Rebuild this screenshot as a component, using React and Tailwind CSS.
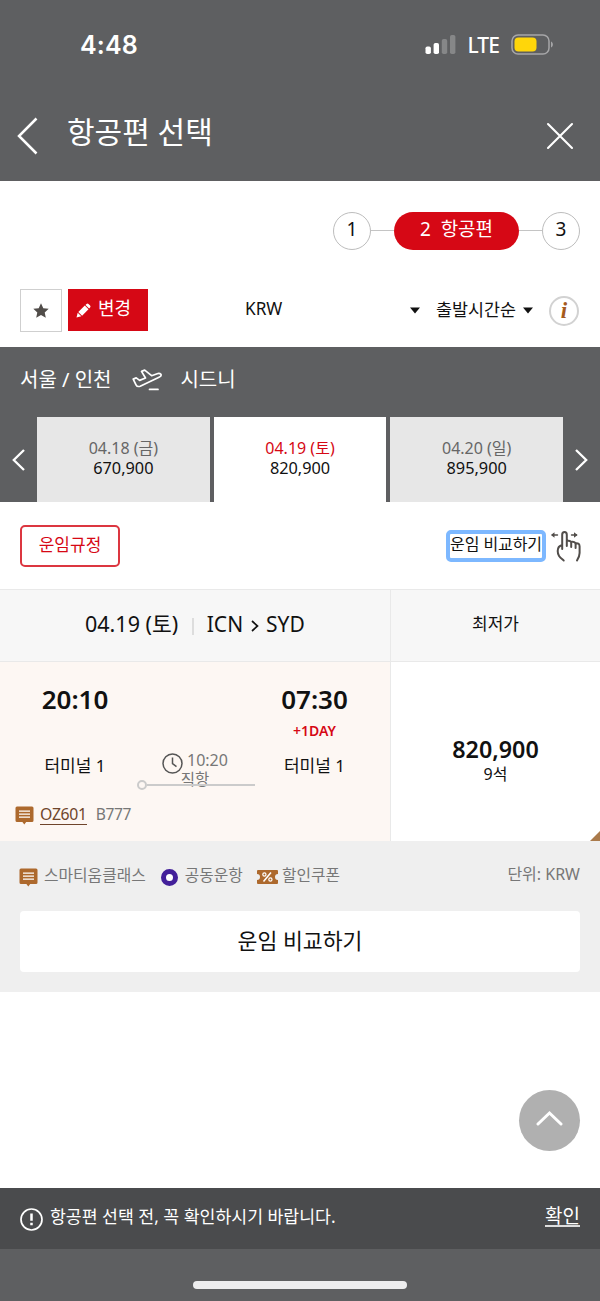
const DATES = [
  { id: 1, label: '04.18 (금)', price: '670,900' },
  { id: 2, label: '04.19 (토)', price: '820,900', active: true },
  { id: 3, label: '04.20 (일)', price: '895,900' },
]

function Chevron({ className, points, stroke = 2.5, viewBox }) {
  return (
    <svg className={className} viewBox={viewBox} fill="none" stroke="currentColor" strokeWidth={stroke}>
      <polyline points={points} />
    </svg>
  )
}

function SeatIcon() {
  return (
    <svg className="w-[19px] h-[19px] shrink-0" viewBox="0 0 19 19">
      <path d="M2 0.5h15a1.5 1.5 0 0 1 1.5 1.5v12.5a1.5 1.5 0 0 1-1.5 1.5h-5.8L9.3 18.4 7.4 16H2a1.5 1.5 0 0 1-1.5-1.5V2A1.5 1.5 0 0 1 2 0.5z" fill="#ad692d" />
      <path d="M4 5.2h11M4 8.2h11M4 11.2h11" stroke="#fff" strokeWidth="1.3" />
    </svg>
  )
}

function StatusBar() {
  return (
    <div className="flex items-start h-[90px] pt-[30px] pl-[80px] pr-[47px]">
      <span className="font-['Inter'] text-[25px] leading-[30px] font-semibold tracking-[0.2px]">4:48</span>
      <svg className="ml-auto mt-[5px] w-[31px] h-5" viewBox="0 0 31 20" fill="#fff">
        <rect x="0.5" y="11.5" width="5.4" height="7.5" rx="1.8" />
        <rect x="8.6" y="8" width="5.4" height="11" rx="1.8" />
        <rect x="16.8" y="4" width="5.4" height="15" rx="1.8" opacity=".25" />
        <rect x="25" y="0" width="5.4" height="19" rx="1.8" opacity=".25" />
      </svg>
      <span className="ml-[11px] text-[21px] leading-[30px] font-medium tracking-[-0.9px]">LTE</span>
      <svg className="ml-[12px] mt-1 -mr-[1px] w-[43px] h-[21px]" viewBox="0 0 43 21">
        <rect x="1" y="1" width="37" height="19" rx="6" fill="none" stroke="#a6a6a8" strokeWidth="1.5" />
        <rect x="3.5" y="3.5" width="22" height="14" rx="4" fill="#ffd60a" />
        <path d="M40 7.5c2.5 1 2.5 5 0 6z" fill="#a6a6a8" />
      </svg>
    </div>
  )
}

function Header() {
  return (
    <header className="h-[181px] bg-[#5e5f61] text-white">
      <StatusBar />
      <div className="flex items-start pl-[17px] pr-[26px]">
        <Chevron className="mt-[27px] w-[21px] h-[38px]" viewBox="0 0 21 38" points="19.5,1.5 2,19 19.5,36.5" />
        <h1 className="ml-[29px] mt-5 text-[30px] leading-[44px]">항공편 선택</h1>
        <svg className="ml-auto mt-8 w-[28px] h-[28px]" viewBox="0 0 28 28" stroke="#fff" strokeWidth="2.1" strokeLinecap="round">
          <path d="M2 2l24 24M26 2L2 26" />
        </svg>
      </div>
    </header>
  )
}

function Steps() {
  return (
    <div className="flex items-center justify-end h-[97px] pt-[2px] pr-5 text-[19px]">
      <span className="w-[38px] h-[38px] rounded-full border-[1.5px] border-[#bdbdbd] text-center leading-[33px]">1</span>
      <span className="w-[23px] h-[1.5px] bg-[#c4c4c4]" />
      <span className="w-[125px] h-[38px] rounded-full bg-[#d60815] text-white text-center leading-[35px] whitespace-pre">2  항공편</span>
      <span className="w-[23px] h-[1.5px] bg-[#c4c4c4]" />
      <span className="w-[38px] h-[38px] rounded-full border-[1.5px] border-[#bdbdbd] text-center leading-[33px]">3</span>
    </div>
  )
}

function Caret({ className }) {
  return (
    <svg className={className} viewBox="0 0 10 7">
      <path d="M0 0.5h10L5 6.5z" fill="#111" />
    </svg>
  )
}

function Toolbar() {
  return (
    <div className="flex items-start h-[69px] pt-[11px] pl-5 pr-[21px]">
      <button className="flex items-center justify-center w-[42px] h-[43px] border border-[#cfcfcf]">
        <svg className="w-[16px] h-[15px]" viewBox="0 0 16 15">
          <path d="M8 0.3l2.3 4.9 5.4.6-4 3.7 1.1 5.3L8 12.1l-4.8 2.7 1.1-5.3-4-3.7 5.4-.6z" fill="#514d4a" />
        </svg>
      </button>
      <button className="flex items-start w-[80px] h-[42px] ml-[6px] pl-[8px] bg-[#d60815] text-white">
        <svg className="mt-[14px] w-[15px] h-[15px]" viewBox="0 0 15 15" fill="#fff">
          <path d="M0.5 14.5l1.2-4.8 3.6 3.6zM2.3 8.9l6.5-6.4 3.7 3.7-6.4 6.5zM9.5 1.9l1-1a1.5 1.5 0 0 1 2 0l1.6 1.6a1.5 1.5 0 0 1 0 2l-1 1z" />
        </svg>
        <span className="ml-[7px] mt-[5px] text-[18px] leading-[28px]">변경</span>
      </button>
      <span className="ml-[97px] mt-[7px] text-[17.2px] leading-[26px]">KRW</span>
      <Caret className="ml-auto mt-[18px] w-[10px] h-[7px]" />
      <span className="ml-[16px] mt-[7px] text-[17.4px] leading-[26px]">출발시간순</span>
      <Caret className="ml-[7px] mt-[18px] w-[10px] h-[7px]" />
      <span className="ml-[16px] mt-[7px] w-[30px] h-[30px] rounded-full border-2 border-[#d2d2d2] text-center text-[#a65b1d] font-['Liberation_Serif'] text-[23px] leading-[25px] font-bold italic">i</span>
    </div>
  )
}

function DatePicker() {
  return (
    <section className="h-[155px] bg-[#5e5f61] text-white">
      <div className="flex items-start h-[70px] pt-[19px] pl-5 text-[20px] leading-[28px]">
        <span>서울 / 인천</span>
        <svg className="ml-[21px] mt-[3px] w-[31px] h-[22px]" viewBox="0 0 31 22" fill="none" stroke="#fff" strokeWidth="1.7" strokeLinejoin="round" strokeLinecap="round">
          <path d="M1.2 10.1l3-1.2 3.4 2.5 5.9-2.4-4-6.6 3.2-1.3 6.9 5.6 5.6-2c2.1-.7 4 .1 4 1.4 0 .9-.9 1.6-2.2 2.1L8.2 17.2c-1.8.6-3.4.2-4.2-1.4z" />
          <path d="M17.5 20.4h8.5" />
        </svg>
        <span className="ml-[17px]">시드니</span>
      </div>
      <div className="flex h-[85px]">
        <div className="w-[37px] shrink-0">
          <Chevron className="ml-3 mt-8 w-[13px] h-[22px]" viewBox="0 0 13 22" points="12,1 1.8,11 12,21" stroke={2.3} />
        </div>
        <div className="flex gap-[4px] w-[526px] text-center text-[16px] leading-5">
          {DATES.map((d) => (
            <button
              key={d.id}
              className={d.active ? 'flex-1 pb-[3px] bg-white text-[#d60815]' : 'flex-1 pb-[3px] bg-[#e7e7e7] text-[#666]'}
            >
              <div>{d.label}</div>
              <div className="text-[#111] text-[16.3px]">{d.price}</div>
            </button>
          ))}
        </div>
        <Chevron className="ml-[12px] mt-8 w-[13px] h-[22px]" viewBox="0 0 13 22" points="1,1 11.2,11 1,21" stroke={2.3} />
      </div>
    </section>
  )
}

function SwipeHand() {
  return (
    <svg className="mt-[28px] ml-[4px] w-[32px] h-[33px]" viewBox="0 0 31 33" fill="none" stroke="#514d4a" strokeWidth="2" strokeLinecap="round">
      <path d="M11.7 19V4.8c0-3.6 4.6-3.6 4.6 0V16M16.3 11c2-.6 4.4 0 4.4 1.5V17M20.7 12c2.2-.5 4.4.2 4.4 2v4M25.1 13.2c2.7-.4 4 .9 4 3.3v6.5c0 3-1 5-2.6 7.5M11.7 15c-3 .7-4.5 2.8-4.5 6 0 5 2.5 6.5 6 9.5" />
      <path d="M7 5H2M26 5h-5" strokeWidth="1.4" />
      <path d="M4 2.2L.4 5 4 7.8zM23.5 2.2L27.1 5l-3.6 2.8z" fill="#514d4a" stroke="none" />
    </svg>
  )
}

function FareBar() {
  return (
    <div className="flex items-start h-[87px] pl-5 pr-[18px]">
      <button className="mt-[23px] w-[100px] h-[42px] pb-[2px] rounded-[5px] border-2 border-[#dc3640] text-[#d60815] text-[17px] leading-6">
        운임규정
      </button>
      <button className="ml-auto mt-[28px] w-[100px] h-[32px] rounded-[5px] border-4 border-[#7db8ff] text-[16px] leading-[20px] tracking-[-0.1px] whitespace-nowrap pb-[5px]">
        운임 비교하기
      </button>
      <SwipeHand />
    </div>
  )
}

function Endpoint({ time, note, terminal, className }) {
  return (
    <div className={className}>
      <div className="text-[26px] leading-[34px] font-semibold">{time}</div>
      <div className="h-[32px] pt-[5px] text-[14px] leading-5 font-semibold text-[#d60815]">{note}</div>
      <div className="mt-[6px] text-[17px] leading-6">{terminal}</div>
    </div>
  )
}

function FlightTable() {
  return (
    <section className="grid grid-cols-[391px_1fr]">
      <div className="flex items-start h-[73px] pt-[18px] pl-[85px] border-y border-r border-[#e9e9e9] bg-[#f7f7f7] text-[21.5px] leading-[32px]">
        <span>04.19 (토)</span>
        <span className="ml-[14px] mt-[10px] w-[1.5px] h-[17px] bg-[#ddd]" />
        <span className="ml-[13px] text-[21px]">ICN</span>
        <Chevron className="ml-[8px] mr-[7px] mt-[12px] w-[8px] h-[12px]" viewBox="0 0 8 12" points="1,1 6.5,6 1,11" stroke={1.7} />
        <span className="text-[21px]">SYD</span>
      </div>
      <div className="h-[73px] pt-[22px] border-y border-[#e9e9e9] bg-[#f7f7f7] text-center text-[17px] leading-6">최저가</div>

      <div className="h-[179px] border-r border-[#e9e9e9] bg-[#fdf7f3]">
        <div className="flex items-start h-[142px] pt-[20px]">
          <Endpoint className="w-[150px] text-center" time="20:10" terminal="터미널 1" />
          <div className="-ml-[13px] mt-[68px] w-[118px] text-[16px] text-[#777]">
            <div className="flex h-[20px] pl-[25px]">
              <svg className="w-[21px] h-[21px] mt-[3px]" viewBox="0 0 21 21" fill="none" stroke="#555" strokeWidth="1.5">
                <circle cx="10.5" cy="10.5" r="9.5" />
                <path d="M10.5 4.5v6.2l4 3" />
              </svg>
              <span className="ml-[4px] leading-5">10:20</span>
            </div>
            <div className="h-[16px] leading-[18px] text-[15.5px] text-center pr-[2px]">직항</div>
            <div className="flex items-center h-[9px] -mt-[6px]">
              <span className="w-[10px] h-[10px] rounded-full border-2 border-[#cbcbcb]" />
              <span className="flex-1 h-[2px] bg-[#cbcbcb]" />
            </div>
          </div>
          <Endpoint className="w-[119px] text-center" time="07:30" note="+1DAY" terminal="터미널 1" />
        </div>
        <div className="flex items-start pt-[1px] pl-[15px] text-[16px] leading-5">
          <div className="mt-[1px]"><SeatIcon /></div>
          <span className="ml-[6px] h-[20px] text-[#6f452b] border-b border-[#6f452b] leading-[19px] text-[15.8px] tracking-[-0.3px]">OZ601</span>
          <span className="ml-[9px] text-[#777] text-[15.6px] leading-[19px] tracking-[-0.4px]">B777</span>
        </div>
      </div>

      <div className="relative h-[179px] pt-[72px] bg-white text-center">
        <div className="text-[23.3px] leading-[30px] font-semibold">820,900</div>
        <div className="text-[16px] leading-5">9석</div>
        <svg className="absolute right-0 bottom-0 w-[10px] h-[10px]" viewBox="0 0 10 10">
          <path d="M10 0v10H0z" fill="#aa7a4b" />
        </svg>
      </div>
    </section>
  )
}

function Legend() {
  return (
    <section className="h-[151px] px-5 bg-[#efefef] text-[15.8px] leading-6 text-[#777]">
      <div className="flex items-start h-[70px] pt-[22px]">
        <div className="mt-[5px] -ml-px"><SeatIcon /></div>
        <span className="ml-[6px]">스마티움클래스</span>
        <span className="ml-[15px] mt-[6px] w-[17px] h-[17px] rounded-full border-[5px] border-[#43209a] bg-white" />
        <span className="ml-[7px]">공동운항</span>
        <svg className="ml-[14px] mt-[7px] w-[21px] h-[14px]" viewBox="0 0 21 14">
          <path d="M1 0h19a1 1 0 0 1 1 1v3a3 3 0 0 0 0 6v3a1 1 0 0 1-1 1H1a1 1 0 0 1-1-1v-3a3 3 0 0 0 0-6V1a1 1 0 0 1 1-1z" fill="#ad692d" />
          <path d="M14 2.5l-7.5 9" stroke="#fff" strokeWidth="1.5" />
          <circle cx="7.4" cy="4.5" r="1.6" fill="none" stroke="#fff" strokeWidth="1.2" />
          <circle cx="13.4" cy="9.5" r="1.6" fill="none" stroke="#fff" strokeWidth="1.2" />
        </svg>
        <span className="ml-[4px]">할인쿠폰</span>
        <span className="ml-auto -mt-[1px] text-[16px]">단위: KRW</span>
      </div>
      <button className="w-full h-[61px] pb-[1px] rounded-[4px] bg-white text-[#111] text-[21.6px] leading-8">운임 비교하기</button>
    </section>
  )
}

export default function App() {
  return (
    <div className="w-[600px] h-[1301px] overflow-hidden flex flex-col bg-white text-[#111] font-['Noto_Sans','Noto_Sans_CJK_KR',sans-serif]">
      <Header />
      <Steps />
      <Toolbar />
      <DatePicker />
      <FareBar />
      <FlightTable />
      <Legend />
      <div className="flex-1 flex justify-end pt-[98px] pr-5">
        <button className="flex justify-center w-[61px] h-[61px] pt-[20px] rounded-full bg-[#b0b0b0] text-white">
          <svg className="w-[27px] h-[17px]" viewBox="0 0 27 17" fill="none" stroke="currentColor" strokeWidth="3" strokeLinecap="round">
            <path d="M2 14L13.5 3 25 14" />
          </svg>
        </button>
      </div>
      <div className="flex items-start h-[61px] px-5 bg-[#4a4b4d] text-white">
        <svg className="mt-[20px] w-[23px] h-[23px]" viewBox="0 0 23 23" fill="none" stroke="#fff">
          <circle cx="11.5" cy="11.5" r="10.5" strokeWidth="1.7" />
          <path d="M11.5 5.5v7.3M11.5 14.8v2.4" strokeWidth="2.5" />
        </svg>
        <span className="ml-[7px] mt-4 text-[17.25px] leading-[26px]">항공편 선택 전, 꼭 확인하시기 바랍니다.</span>
        <span className="ml-auto mt-[15px] h-[24px] border-b-2 border-[#ddd] text-[19px] leading-[27px]">확인</span>
      </div>
      <footer className="flex justify-center h-[52px] pt-[32px] bg-[#5e5f61]">
        <span className="w-[214px] h-[8px] rounded-full bg-[#ededee]" />
      </footer>
    </div>
  )
}
